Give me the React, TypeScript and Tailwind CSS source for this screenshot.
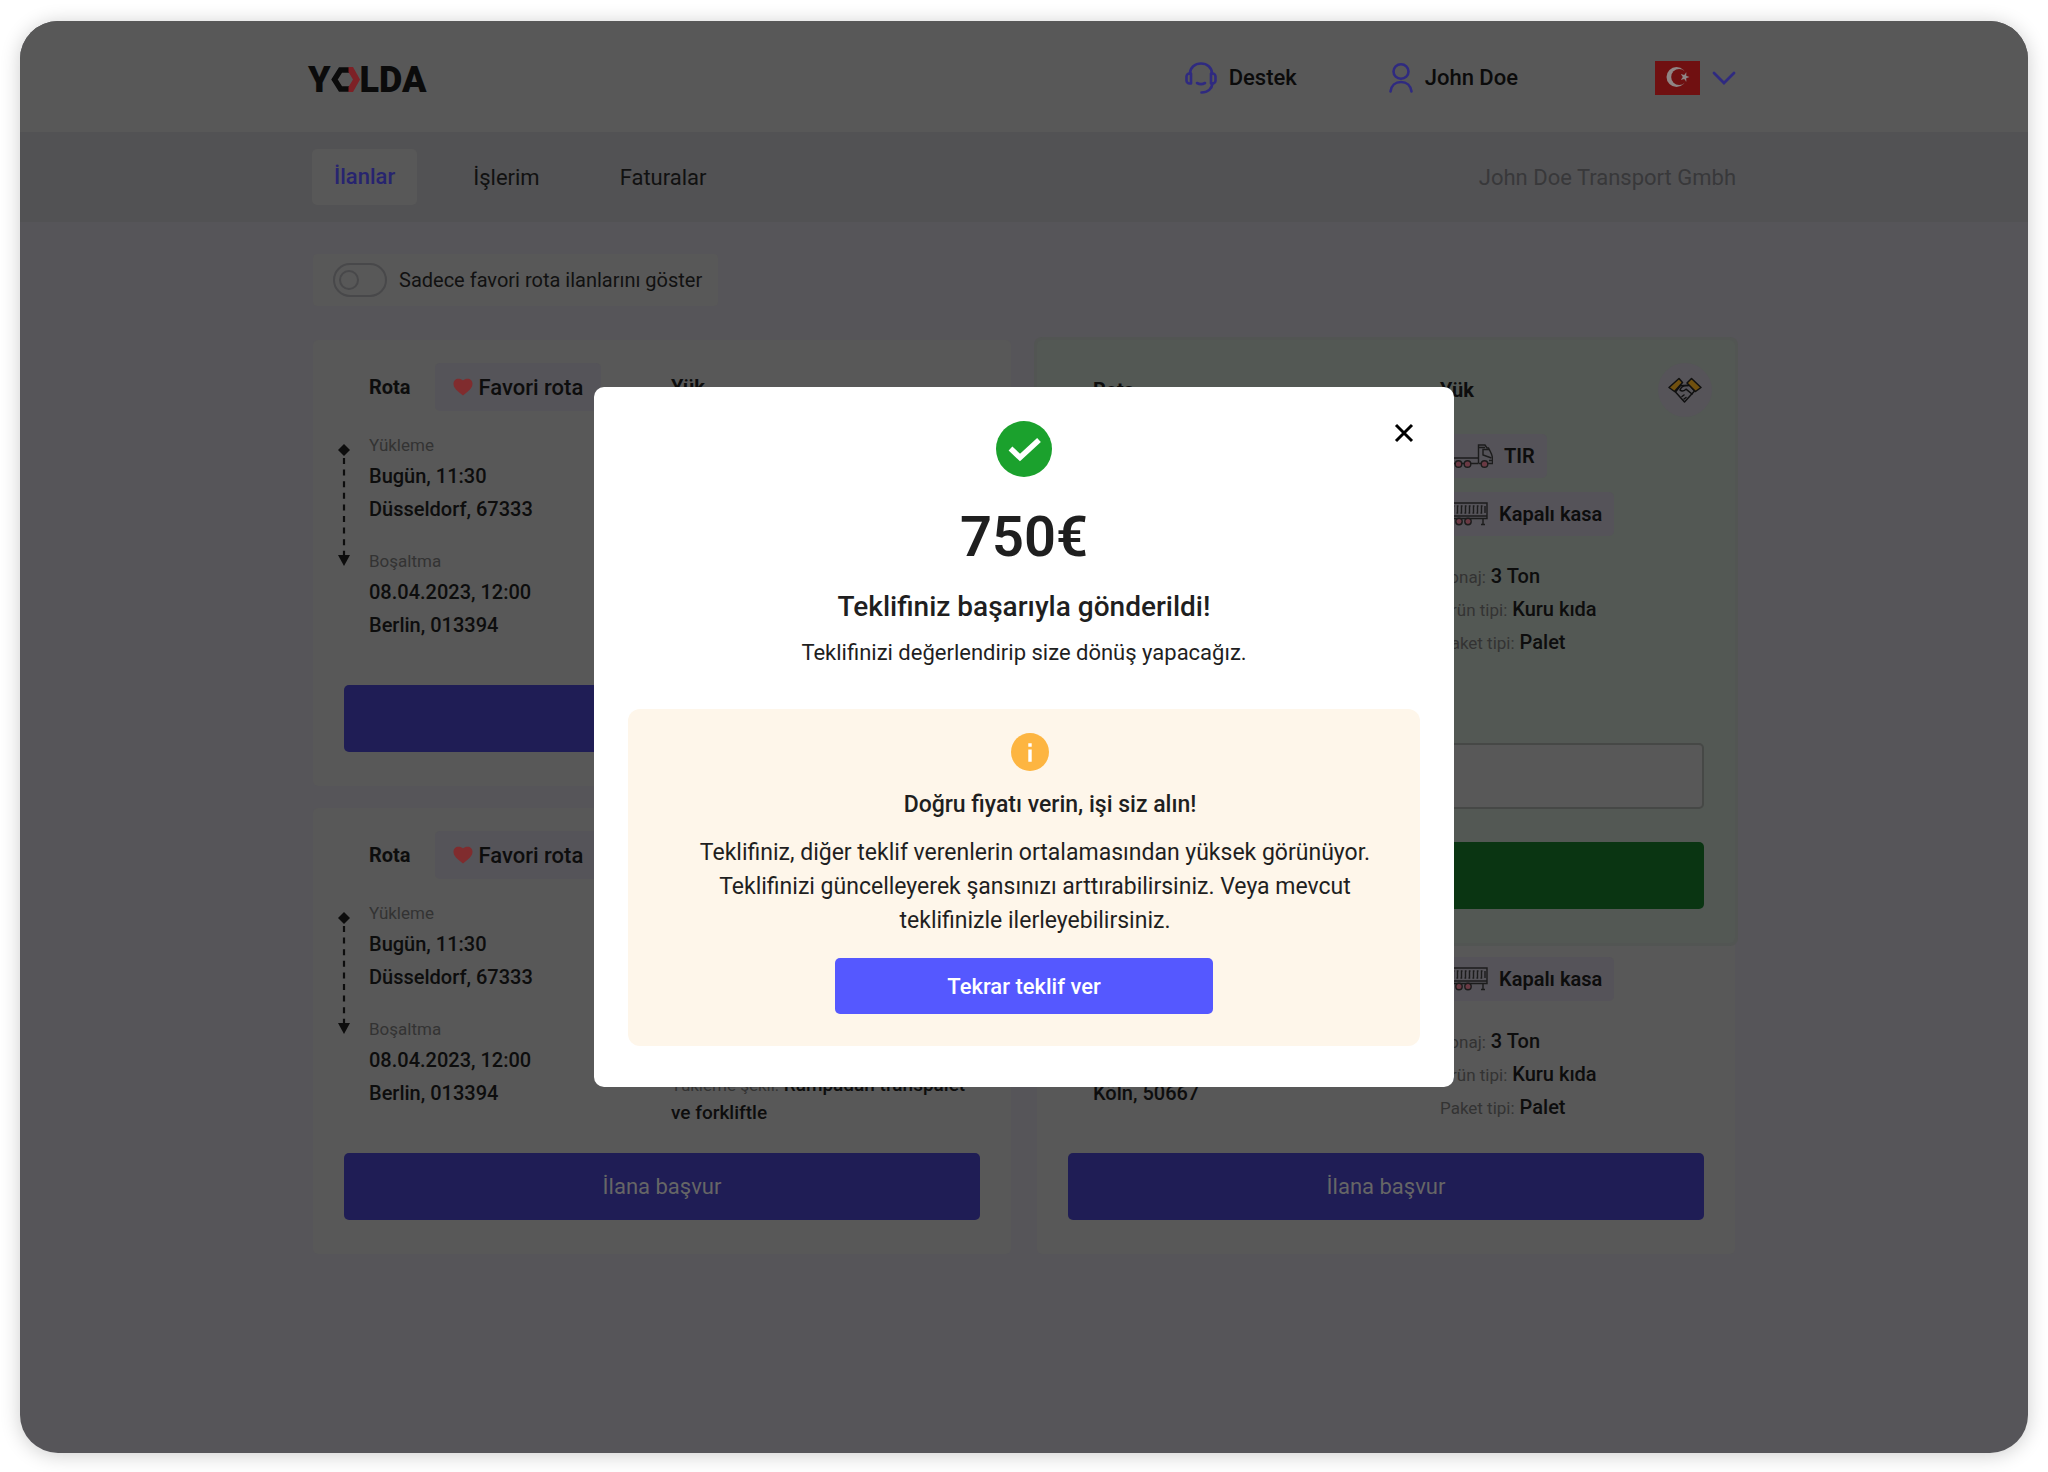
import { FC, ReactNode } from 'react';

type Detail = {
  label: string;
  value: string;
};

type Stop = {
  label: string;
  time: string;
  place: string;
};

type Listing = {
  favorite: boolean;
  stops: Stop[];
  details: Detail[];
};

const pickup: Stop = {
  label: 'Yükleme',
  time: 'Bugün, 11:30',
  place: 'Düsseldorf, 67333',
};

const favoriteListing: Listing = {
  favorite: true,
  stops: [
    pickup,
    { label: 'Boşaltma', time: '08.04.2023, 12:00', place: 'Berlin, 013394' },
  ],
  details: [
    { label: 'Tonaj:', value: '3 Ton' },
    { label: 'Ürün tipi:', value: 'Kuru kıda' },
    { label: 'Yükleme şekli:', value: 'Rampadan transpalet ve forkliftle' },
  ],
};

const plainListing: Listing = {
  favorite: false,
  stops: [
    pickup,
    { label: 'Boşaltma', time: '08.04.2023, 12:00', place: 'Köln, 50667' },
  ],
  details: [
    { label: 'Tonaj:', value: '3 Ton' },
    { label: 'Ürün tipi:', value: 'Kuru kıda' },
    { label: 'Paket tipi:', value: 'Palet' },
  ],
};

const Logo: FC = () => (
  <a
    href="#"
    aria-label="YOLDA"
    className="flex items-center pt-1 text-[36px] leading-10 font-black text-[#0b0b0b]"
  >
    <span>Y</span>
    <svg viewBox="0 0 29 25" className="h-[25px] w-[29px]" fill="none">
      <path d="M18 3H9.500L3.500 12.500l6 9.500H18" stroke="#0b0b0b" strokeWidth="5.500" />
      <path d="M17.500 0H22l7 12.500L22 25h-4.500v-5l4.500-7.500L17.500 5z" fill="#7d2126" />
    </svg>
    <span>LDA</span>
  </a>
);

const HeadsetIcon: FC = () => (
  <svg
    viewBox="0 0 32 32"
    className="h-8 w-8"
    fill="none"
    stroke="#2f2a80"
    strokeWidth="2.600"
    strokeLinecap="round"
    strokeLinejoin="round"
  >
    <path d="M5 11.500C5 5.500 10 1.500 16 1.500S27 5.500 27 11.500" />
    <path d="M6 11.500H4.500a3 3 0 0 0-3 3v4a3 3 0 0 0 3 3H6z" />
    <path d="M26 11.500h1.500a3 3 0 0 1 3 3v4a3 3 0 0 1-3 3H26z" />
    <path d="M27.500 21.500c-.5 5-4.500 9-11 9" />
    <path d="M12 21c2.500 1.400 5.500 1.400 8 0" />
  </svg>
);

const UserIcon: FC = () => (
  <svg
    viewBox="0 0 24 30"
    className="h-[30px] w-6"
    fill="none"
    stroke="#2f2a80"
    strokeWidth="2.600"
    strokeLinecap="round"
  >
    <ellipse cx="12" cy="8.500" rx="7.500" ry="7.200" />
    <path d="M1.500 28.500c.8-6 5-9.500 10.500-9.500s9.700 3.500 10.500 9.500" />
  </svg>
);

const TurkishFlag: FC = () => (
  <svg viewBox="0 0 45 34" className="h-[34px] w-[45px]">
    <rect width="45" height="34" fill="#701011" />
    <circle cx="21.500" cy="16" r="10" fill="#8f8585" />
    <circle cx="24.200" cy="16" r="8" fill="#701011" />
    <path
      d="M34.500 16l-3.300 1.200.2 3.600-2.200-2.800-3.400 1 2-3-2-2.900 3.400 1 2.200-2.800-.2 3.500z"
      fill="#8f8585"
    />
  </svg>
);

const HeartIcon: FC = () => (
  <svg viewBox="0 0 20 18" className="h-[18px] w-5">
    <path
      d="M10 17.500C4 13 .5 9.800.5 5.800.500 2.800 2.700.8 5.300.8c1.900 0 3.600.6 4.700 1.700C11.100 1.400 12.800.8 14.700.8c2.600 0 4.800 2 4.800 5 0 4-3.500 7.200-9.500 11.700z"
      fill="#802c2e"
    />
  </svg>
);

const HandshakeIcon: FC = () => (
  <svg
    viewBox="0 0 34 26"
    className="h-[26px] w-[34px]"
    stroke="#101010"
    strokeWidth="1.500"
    strokeLinejoin="round"
    strokeLinecap="round"
  >
    <path d="M12.500 8.500h9.500l4.500 5.500-10 11-9-10z" fill="#565459" />
    <path d="M11 1.500l3.500 4-8 9L1 10.500z" fill="#70500f" />
    <path d="M23.500 1.500l-4.500 4.500 8.500 8.500 5.500-4z" fill="#70500f" />
    <path d="M20 8.500c-4-.5-7 1.500-8 4.500 2 2 4 1 6-.8l6 4.800" fill="none" />
    <path d="M14 19.500l2-1.500M16 22l2-1.500" fill="none" />
  </svg>
);

const TruckIcon: FC = () => (
  <svg
    viewBox="0 0 49 24"
    className="h-6 w-[49px]"
    fill="none"
    stroke="#1c1c1c"
    strokeWidth="1.400"
  >
    <path d="M1 14h33M1 19.500h33M1 14v5.500" />
    <path d="M34.500 19.500V1h6.500l2 3h1.500c2 4 4 7 4 10.500v5H34.500" />
    <path d="M35 3.500h6M45.500 5.500h-6.500v5.500l8.500 3M45 16.500h3" />
    <g fill="#6a3a44">
      <circle cx="5" cy="20" r="3.300" />
      <circle cx="14.500" cy="20" r="3.300" />
      <circle cx="23.500" cy="20" r="3.300" />
      <circle cx="40.500" cy="20" r="3.300" />
    </g>
  </svg>
);

const TrailerIcon: FC = () => (
  <svg
    viewBox="0 0 44 24"
    className="h-6 w-11"
    fill="none"
    stroke="#1c1c1c"
    strokeWidth="1.400"
  >
    <path d="M1 1h42v15.500H1zM1 14h42" />
    <path d="M6.500 4H5.500v7H4.500M10.500 4H9.500v7H8.500M14.500 4h-1v7h-1M18.500 4h-1v7h-1M22.500 4h-1v7h-1M26.500 4h-1v7h-1M30.500 4h-1v7h-1M34.500 4h-1v7h-1M38.500 4h-1v7h-1M41 4v7" />
    <path d="M39 17v5M37 22.500h4" />
    <g fill="#6a3a44">
      <circle cx="5.500" cy="19.500" r="3.200" />
      <circle cx="15" cy="19.500" r="3.200" />
      <circle cx="24" cy="19.500" r="3.200" />
    </g>
  </svg>
);

const RouteLine: FC = () => (
  <svg
    viewBox="0 0 12 122"
    className="-ml-1.5 mt-[13px] h-[122px] w-3 shrink-0"
    fill="#0d0d0d"
  >
    <path d="M6 0l6 6-6 6-6-6z" />
    <path d="M6 14v98" stroke="#0d0d0d" strokeWidth="2.200" strokeDasharray="6 5.600" />
    <path d="M0 111h12l-6 11z" />
  </svg>
);

const Header: FC = () => (
  <header className="flex h-[111px] items-center justify-center bg-[#585858]">
    <div className="flex w-full max-w-[1432px] items-center pt-0.5 pr-1 text-[22px] font-medium text-[#0b0b0b]">
      <Logo />
      <div className="ml-auto flex items-center">
        <a href="#" className="flex items-center gap-3">
          <HeadsetIcon />
          Destek
        </a>
        <a href="#" className="ml-[92px] flex items-center gap-3">
          <UserIcon />
          John Doe
        </a>
        <button aria-label="Dil seçimi" className="ml-[137px] flex items-center gap-3">
          <TurkishFlag />
          <svg viewBox="0 0 24 14" className="h-3.5 w-6" fill="none">
            <path
              d="M2 2l10 10L22 2"
              stroke="#2f2a80"
              strokeWidth="2.800"
              strokeLinecap="round"
            />
          </svg>
        </button>
      </div>
    </div>
  </header>
);

const Navigation: FC = () => (
  <nav className="flex h-[90px] justify-center bg-[#525254]">
    <div className="flex w-full max-w-[1424px] items-center text-[22px] text-[#111111]">
      <a
        href="#"
        className="rounded-[5px] bg-[#585858] px-[22px] py-3 leading-8 font-medium text-[#27246f]"
      >
        İlanlar
      </a>
      <a href="#" className="ml-14">
        İşlerim
      </a>
      <a href="#" className="ml-20">
        Faturalar
      </a>
      <span className="ml-auto text-[#38383a]">John Doe Transport Gmbh</span>
    </div>
  </nav>
);

const FavoriteFilter: FC = () => (
  <label className="flex h-[52px] w-fit items-center gap-3 rounded bg-[#585858] pr-4 pl-5 text-[20px] text-[#111111]">
    <input
      type="checkbox"
      role="switch"
      className="h-[34px] w-[54px] appearance-none rounded-full border-2 border-[#48484a] before:mt-[5px] before:ml-1 before:block before:h-5 before:w-5 before:rounded-full before:border-2 before:border-[#48484a]"
    />
    Sadece favori rota ilanlarını göster
  </label>
);

const Chip: FC<{ children: ReactNode }> = ({ children }) => (
  <span className="flex h-11 w-fit items-center gap-[11px] rounded-[5px] bg-[#555359] pr-3 pl-1 text-[20px] font-semibold">
    {children}
  </span>
);

const ListingInfo: FC<Listing> = ({ favorite, stops, details }) => (
  <div
    className={
      favorite
        ? 'grid grid-cols-[327px_1fr] gap-y-5'
        : 'grid grid-cols-[372px_1fr] gap-y-5'
    }
  >
    <div className="flex h-12 items-center gap-6 pl-[25px]">
      <h2 className="text-[20px] font-bold">Rota</h2>
      {favorite && (
        <span className="flex h-12 items-center gap-1.5 rounded-[5px] bg-[#555459] px-[18px] text-[22px] font-medium">
          <HeartIcon />
          Favori rota
        </span>
      )}
    </div>
    <h2 className="self-center text-[20px] font-bold">Yük</h2>

    <div className="flex min-h-[228px] gap-[19px]">
      <RouteLine />
      <div className="flex flex-col gap-[21px] text-[20px] leading-[33px] font-medium">
        {stops.map(({ label, time, place }) => (
          <div key={label}>
            <p className="text-[17px] leading-[29px] font-normal text-[#333333]">{label}</p>
            <p>{time}</p>
            <p>{place}</p>
          </div>
        ))}
      </div>
    </div>

    <div>
      <div className="flex flex-col gap-3.5">
        <Chip>
          <TruckIcon />
          TIR
        </Chip>
        <Chip>
          <TrailerIcon />
          Kapalı kasa
        </Chip>
      </div>
      <div
        className={
          favorite
            ? 'mt-3.5 text-[19px] leading-7 font-medium'
            : 'mt-6 text-[20px] leading-8 font-medium'
        }
      >
        {details.map(({ label, value }) => (
          <p key={label}>
            <span className="text-[17px] font-normal text-[#333333]">{label}</span> {value}
          </p>
        ))}
      </div>
    </div>
  </div>
);

const ListingCard: FC<Listing> = (listing) => (
  <article className="rounded-[5px] bg-[#585858] px-[31px] pt-[23px] pb-[34px]">
    <ListingInfo {...listing} />
    <button className="mt-[26px] h-[67px] w-full rounded-[5px] bg-[#1f1d55] text-[22px] text-[#666666]">
      İlana başvur
    </button>
  </article>
);

const OfferCard: FC<Listing> = (listing) => (
  <article className="relative z-10 rounded-[5px] bg-[#535854] px-[31px] pt-[26px] pb-[34px] ring-[3px] ring-[#525553]">
    <span className="absolute top-[23px] right-[23px] flex h-[54px] w-[54px] items-center justify-center rounded-full bg-[#565459]">
      <HandshakeIcon />
    </span>
    <ListingInfo {...listing} />
    <input
      type="text"
      aria-label="Teklifiniz"
      className="mt-[81px] block h-[66px] w-full rounded-[5px] border-2 border-[#464846] bg-[#585858] px-4 text-[22px]"
    />
    <button className="mt-[33px] h-[67px] w-full rounded-[5px] bg-[#0a3512] text-[22px] text-[#666666]">
      Teklif ver
    </button>
  </article>
);

const OfferSentModal: FC = () => (
  <div className="absolute inset-0 z-20 flex items-center justify-center">
    <div
      role="dialog"
      aria-modal="true"
      className="relative flex w-[860px] flex-col items-center rounded-[10px] bg-white px-[34px] pt-[34px] pb-[41px] text-[#1f1f1f]"
    >
      <button aria-label="Kapat" className="absolute top-8 right-9 p-1">
        <svg viewBox="0 0 20 20" className="h-5 w-5" fill="none" stroke="#000" strokeWidth="3">
          <path d="M2 2l16 16M18 2L2 18" />
        </svg>
      </button>
      <svg viewBox="0 0 56 56" className="h-14 w-14">
        <circle cx="28" cy="28" r="28" fill="#1ba12d" />
        <path d="M14.500 27.500l9.500 9L43 19" fill="none" stroke="#fff" strokeWidth="5.500" />
      </svg>
      <p className="mt-7 text-[56px] leading-[64px] font-semibold">750€</p>
      <h1 className="mt-5 text-[28px] leading-9 font-medium">
        Teklifiniz başarıyla gönderildi!
      </h1>
      <p className="mt-3 text-[22px] leading-8">
        Teklifinizi değerlendirip size dönüş yapacağız.
      </p>
      <section className="mt-10 flex w-full flex-col items-center rounded-xl bg-[#fef6ea] pt-6 pb-8 text-center text-[22px]">
        <svg viewBox="0 0 38 38" className="ml-3 h-[38px] w-[38px]">
          <circle cx="19" cy="19" r="19" fill="#fdb541" />
          <path d="M17.300 10.300h3.400v3.400h-3.400zM17.300 16.500h3.400v12.200h-3.400z" fill="#fff" />
        </svg>
        <h2 className="mt-[17px] pl-[52px] text-[23px] leading-[34px] font-medium">
          Doğru fiyatı verin, işi siz alın!
        </h2>
        <p className="mt-3.5 ml-[22px] w-[680px] text-[23px] leading-[34px]">
          Teklifiniz, diğer teklif verenlerin ortalamasından yüksek görünüyor. Teklifinizi
          güncelleyerek şansınızı arttırabilirsiniz. Veya mevcut teklifinizle ilerleyebilirsiniz.
        </p>
        <button className="mt-5 h-14 w-[378px] rounded-[5px] bg-[#5558ff] font-medium text-white">
          Tekrar teklif ver
        </button>
      </section>
    </div>
  </div>
);

export default function App() {
  return (
    <div className="flex min-h-screen flex-col bg-white px-5 pt-[21px] pb-[19px] font-[Roboto,sans-serif]">
      <div className="relative flex-1 overflow-hidden rounded-[38px] bg-[#565559] shadow-[0_2px_20px_rgba(0,0,0,0.2)]">
        <Header />
        <Navigation />
        <main className="mx-auto w-full max-w-[1422px] pt-8 text-[#0d0d0d]">
          <FavoriteFilter />
          <div className="mt-[34px] grid grid-cols-2 items-start gap-x-[26px]">
            <div className="flex flex-col gap-[22px]">
              <ListingCard {...favoriteListing} />
              <ListingCard {...favoriteListing} />
            </div>
            <div>
              <OfferCard {...plainListing} />
              <div className="-mt-[135px]">
                <ListingCard {...plainListing} />
              </div>
            </div>
          </div>
        </main>
        <OfferSentModal />
      </div>
    </div>
  );
}
